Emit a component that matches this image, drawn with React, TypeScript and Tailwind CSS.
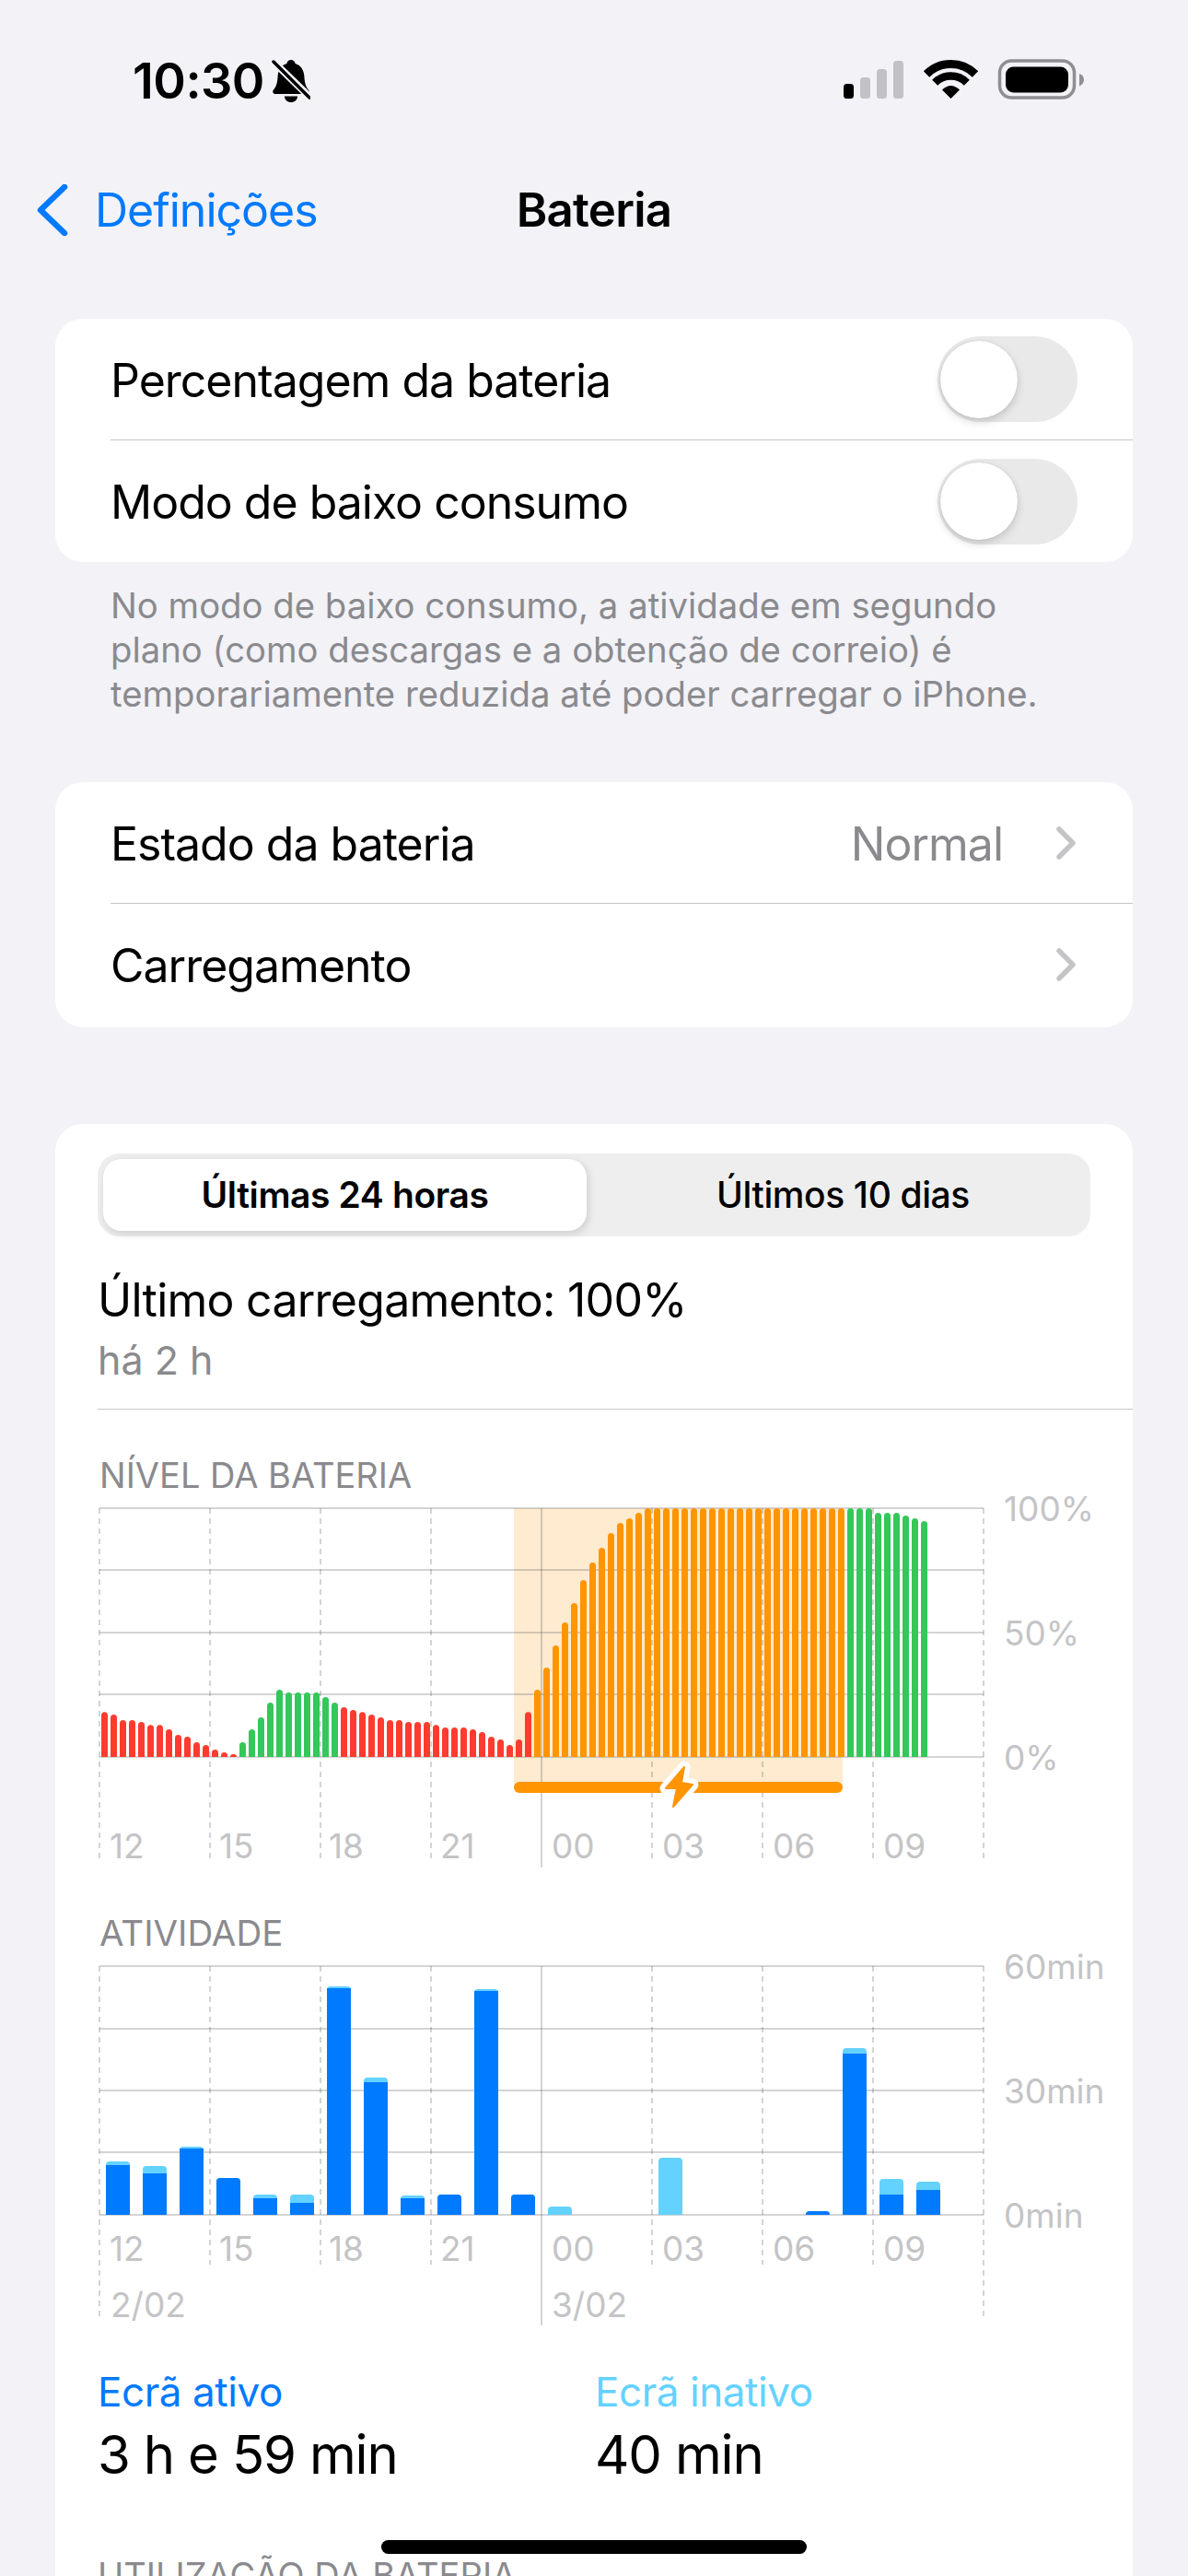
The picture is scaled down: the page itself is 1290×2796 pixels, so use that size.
import React from "react";

const font = "font-['Inter','Noto_Sans',sans-serif]";

// battery level bar heights, px above the baseline, one bar per 15 minutes
const levelBars: { h: number; c: string }[] = [
  ...[146, 138, 120, 120, 114, 104, 104, 90, 72, 66, 48, 39, 24, 15, 9].map((v) => ({ h: v / 3, c: "#ff3b30" })),
  ...[48, 90, 129, 177, 219, 210, 210, 210, 210, 195, 177].map((v) => ({ h: v / 3, c: "#34c759" })),
  ...[162, 153, 146, 138, 129, 120, 120, 114, 114, 114, 104, 96, 96, 96, 90, 81, 66, 57, 39, 57, 146].map((v) => ({ h: v / 3, c: "#ff3b30" })),
  ...[219, 291, 363, 438, 501, 576, 633, 681, 729, 762, 777, 795].map((v) => ({ h: v / 3, c: "#ff9500" })),
  ...Array.from({ length: 22 }, () => ({ h: 270, c: "#ff9500" })),
  ...Array.from({ length: 3 }, () => ({ h: 270, c: "#34c759" })),
  ...[795, 795, 795, 786, 777, 768].map((v) => ({ h: v / 3, c: "#34c759" })),
];

// hourly activity: [screen on, screen on + off] in px
const activity: [number, number][] = [
  [54, 58], [45, 53], [72, 74], [40, 40], [18, 22], [13, 22], [246, 248], [144, 149], [18, 21], [22, 22],
  [243, 245], [22, 22], [0, 9], [0, 0], [0, 0], [0, 62], [0, 0], [0, 0], [0, 0], [4, 4], [175, 181], [22, 39], [27, 36],
];

const hours = ["12", "15", "18", "21", "00", "03", "06", "09"];
const hourX = [19, 138, 257, 378, 499, 619, 739, 859];
const dashX = [8, 128, 248, 368, 608, 728, 848, 968];

function topRounded(x: number, base: number, w: number, h: number, r: number) {
  const rad = Math.min(r, h);
  return `M${x} ${base}V${base - h + rad}Q${x} ${base - h} ${x + rad} ${base - h}H${x + w - rad}Q${x + w} ${base - h} ${x + w} ${base - h + rad}V${base}Z`;
}

function Grid({ rows, dashEnd, edgeEnd, solidEnd }: { rows: number[]; dashEnd: number; edgeEnd: number; solidEnd: number }) {
  const line = "rgba(60,60,67,0.29)";
  return (
    <g>
      {rows.map((y) => (
        <line key={y} x1={8} x2={968} y1={y} y2={y} stroke={line} strokeWidth={1.5} />
      ))}
      {dashX.map((x) => (
        <line
          key={x}
          x1={x}
          x2={x}
          y1={rows[0]}
          y2={x === 8 || x === 968 ? edgeEnd : dashEnd}
          stroke={line}
          strokeWidth={1.5}
          strokeDasharray="6 5"
        />
      ))}
      <line x1={488} x2={488} y1={rows[0]} y2={solidEnd} stroke={line} strokeWidth={1.5} />
    </g>
  );
}

function AxisText({ x, y, children }: { x: number; y: number; children: React.ReactNode }) {
  return (
    <text x={x} y={y} fontSize={37} fill="#c4c4c6" fontFamily="Inter, sans-serif">
      {children}
    </text>
  );
}

function LevelChart() {
  return (
    <svg viewBox="0 0 1130 400" className="ml-[40px] block h-[400px] w-[1130px] overflow-visible">
      <rect x={458} y={7} width={357} height={303} fill="#feebd0" />
      <Grid rows={[7, 74, 142, 209, 277]} dashEnd={391} edgeEnd={391} solidEnd={397} />
      {levelBars.map((b, i) => (
        <path key={i} d={topRounded(10 + i * 10, 277, 7, b.h, 3.5)} fill={b.c} />
      ))}
      <rect x={458} y={304} width={357} height={12} rx={6} fill="#ff9500" />
      {/* charging bolt: white halo first, then the orange shape on top */}
      <path
        d="M643 288L623 311H635L631 331L652 307L640 305L643 288Z"
        fill="#fff"
        stroke="#fff"
        strokeWidth={13}
        strokeLinejoin="round"
      />
      <path
        d="M643 288L623 311H635L631 331L652 307L640 305L643 288Z"
        fill="#ff9500"
        stroke="#ff9500"
        strokeWidth={2}
        strokeLinejoin="round"
      />
      {hours.map((h, i) => (
        <AxisText key={h} x={hourX[i]} y={387}>{h}</AxisText>
      ))}
      <AxisText x={990} y={21}>100%</AxisText>
      <AxisText x={990} y={156}>50%</AxisText>
      <AxisText x={990} y={291}>0%</AxisText>
    </svg>
  );
}

function ActivityChart() {
  return (
    <svg viewBox="0 0 1130 400" className="ml-[40px] block h-[400px] w-[1130px] overflow-visible">
      <Grid rows={[8, 76, 143, 210, 278]} dashEnd={332} edgeEnd={392} solidEnd={398} />
      {activity.map(([on, total], i) => (
        <g key={i}>
          {total > 0 && <path d={topRounded(15 + i * 40, 278, 26, total, 4)} fill="#64d2ff" />}
          {on > 0 && <path d={on === total ? topRounded(15 + i * 40, 278, 26, on, 4) : `M${15 + i * 40} 278V${278 - on}H${41 + i * 40}V278Z`} fill="#007aff" />}
        </g>
      ))}
      {hours.map((h, i) => (
        <AxisText key={h} x={hourX[i]} y={328}>{h}</AxisText>
      ))}
      <AxisText x={20} y={389}>2/02</AxisText>
      <AxisText x={499} y={389}>3/02</AxisText>
      <AxisText x={990} y={22}>60min</AxisText>
      <AxisText x={990} y={157}>30min</AxisText>
      <AxisText x={990} y={292}>0min</AxisText>
    </svg>
  );
}

function Toggle() {
  return (
    <div className="flex h-[93px] w-[152px] items-center rounded-full bg-[#e9e9ea]">
      <div className="ml-[3px] h-[84px] w-[84px] rounded-full bg-white shadow-[0_4px_10px_rgba(0,0,0,0.16),0_0_2px_rgba(0,0,0,0.12)]" />
    </div>
  );
}

function Chevron() {
  return (
    <svg viewBox="0 0 24 38" className="h-[38px] w-[24px]" fill="none">
      <path d="M4 4L19 19L4 34" stroke="#c4c4c7" strokeWidth={5.5} strokeLinecap="round" strokeLinejoin="round" />
    </svg>
  );
}

function Row({ label, right, divider }: { label: string; right: React.ReactNode; divider?: boolean }) {
  return (
    <div className={divider ? "ml-[60px] flex h-[132px] items-center border-b-[1.5px] border-[#c6c6c8] pr-[60px]" : "ml-[60px] flex h-[132px] items-center pr-[60px]"}>
      <span className="flex-1 pt-[2px] text-[50px] leading-[60px] tracking-[-0.02em] text-black">{label}</span>
      {right}
    </div>
  );
}

function BellSlash() {
  return (
    <svg viewBox="0 0 42 46" className="h-[46px] w-[42px]">
      <path d="M21 0C23.6 0 25.4 1.8 25.6 4C32 6 35 11.5 35.4 18C35.8 25 37 29 40 32.5C41.6 34.4 40.6 37 38 37H4C1.4 37 .4 34.4 2 32.5C5 29 6.2 25 6.6 18C7 11.5 10 6 16.4 4C16.6 1.8 18.4 0 21 0Z" fill="#000" />
      <path d="M14 39.5H28C28 43.5 24.8 46 21 46C17.2 46 14 43.5 14 39.5Z" fill="#000" />
      <path d="M3 3L41 40" stroke="#f2f2f7" strokeWidth={8} />
      <path d="M2 2L41 41" stroke="#000" strokeWidth={3.5} strokeLinecap="round" />
    </svg>
  );
}

function StatusIcons() {
  const cx = 116.5;
  const arc = (r: number) => {
    const d = r * Math.SQRT1_2;
    return `M${cx - d} ${41 - d}A${r} ${r} 0 0 1 ${cx + d} ${41 - d}`;
  };
  return (
    <svg viewBox="0 0 262 48" className="mt-[2px] h-[48px] w-[262px] overflow-visible">
      <rect x={0} y={25} width={11} height={16} rx={3.5} fill="#000" />
      <rect x={18} y={18} width={11} height={23} rx={3.5} fill="#c1c1c6" />
      <rect x={36} y={9} width={11} height={32} rx={3.5} fill="#c1c1c6" />
      <rect x={54} y={0} width={11} height={41} rx={3.5} fill="#c1c1c6" />
      <path d={arc(37.5)} stroke="#000" strokeWidth={9} fill="none" />
      <path d={arc(24.5)} stroke="#000" strokeWidth={8.5} fill="none" />
      <path d={`M${cx} 41L${cx - 9.5} 31.5Q${cx} 22.5 ${cx + 9.5} 31.5Z`} fill="#000" />
      <rect x={169.5} y={0} width={81} height={40} rx={13} fill="none" stroke="#8e8e93" strokeWidth={3.5} />
      <rect x={176} y={6.5} width={68} height={28} rx={8.5} fill="#000" />
      <path d="M256 14C259 15 261 17 261 20.5C261 24 259 26 256 27.5Z" fill="#8e8e93" />
    </svg>
  );
}

export default function App() {
  return (
    <div className={`relative h-[2796px] w-[1290px] overflow-hidden bg-[#f2f2f7] ${font}`}>
      <div className="flex h-[166px] items-start justify-between pt-[64px] pl-[144px] pr-[112px]">
        <div className="flex items-center gap-[8px]">
          <span className="text-[54px] leading-[48px] font-semibold tracking-[-0.01em] text-black">10:30</span>
          <BellSlash />
        </div>
        <StatusIcons />
      </div>

      <div className="relative flex h-[124px] items-center justify-center">
        <div className="absolute left-[40px] flex items-center gap-[29px]">
          <svg viewBox="0 0 34 56" className="h-[56px] w-[34px]" fill="none">
            <path d="M30 3L4 28L30 53" stroke="#007aff" strokeWidth={6.5} strokeLinecap="round" strokeLinejoin="round" />
          </svg>
          <span className="text-[50px] leading-[60px] tracking-[-0.02em] text-[#007aff]">Definições</span>
        </div>
        <span className="text-[51px] leading-[60px] font-semibold tracking-[-0.015em] text-black">Bateria</span>
      </div>

      <section className="mx-[60px] mt-[56px] overflow-hidden rounded-[30px] bg-white">
        <Row label="Percentagem da bateria" right={<Toggle />} divider />
        <Row label="Modo de baixo consumo" right={<Toggle />} />
      </section>
      <p className="mt-[23px] mr-[130px] ml-[120px] text-[38.3px] leading-[48px] text-[#8a8a8e]">
        No modo de baixo consumo, a atividade em segundo plano (como descargas e a obtenção de correio) é temporariamente reduzida até poder carregar o iPhone.
      </p>

      <section className="mx-[60px] mt-[72px] h-[266px] overflow-hidden rounded-[30px] bg-white">
        <Row
          label="Estado da bateria"
          divider
          right={
            <div className="flex items-center gap-[57px]">
              <span className="pt-[2px] text-[50px] leading-[60px] tracking-[-0.02em] text-[#8a8a8e]">Normal</span>
              <Chevron />
            </div>
          }
        />
        <Row label="Carregamento" right={<Chevron />} />
      </section>

      <section className="mx-[60px] mt-[105px] rounded-t-[30px] bg-white pt-[32px] pb-[60px]">
        <div className="mr-[46px] ml-[46px] flex h-[90px] items-center rounded-[24px] bg-[#eeeeef] p-[6px]">
          <div className="flex h-[78px] w-[525px] items-center justify-center rounded-[20px] bg-white text-[39px] font-semibold tracking-[-0.01em] text-black shadow-[2px_3px_8px_rgba(0,0,0,0.14)]">
            Últimas 24 horas
          </div>
          <div className="flex h-[78px] flex-1 items-center justify-center pl-[16px] text-[39px] font-medium tracking-[-0.01em] text-black">
            Últimos 10 dias
          </div>
        </div>

        <h2 className="mt-[39px] ml-[46px] text-[50px] leading-[60px] font-normal tracking-[-0.015em] text-black">Último carregamento: 100%</h2>
        <p className="mt-[10px] ml-[46px] text-[43px] leading-[50px] text-[#8a8a8e]">há 2 h</p>
        <div className="mt-[28px] ml-[46px] border-b-[1.5px] border-[#c6c6c8]" />

        <h3 className="mt-[51px] mb-[9px] ml-[48px] text-[38px] leading-[40px] font-normal text-[#8a8a8e]">NÍVEL DA BATERIA</h3>
        <LevelChart />

        <h3 className="mt-[48px] mb-[8px] ml-[48px] text-[38.5px] leading-[40px] font-normal text-[#8a8a8e]">ATIVIDADE</h3>
        <ActivityChart />

        <div className="mt-[45px] ml-[46px] flex">
          <div className="w-[540px]">
            <p className="text-[44px] leading-[50px] tracking-[-0.01em] text-[#007aff]">Ecrã ativo</p>
            <p className="mt-[8px] text-[58px] leading-[70px] tracking-[-0.02em] text-black">3 h e 59 min</p>
          </div>
          <div>
            <p className="text-[44px] leading-[50px] tracking-[-0.01em] text-[#64d2ff]">Ecrã inativo</p>
            <p className="mt-[8px] text-[58px] leading-[70px] tracking-[-0.02em] text-black">40 min</p>
          </div>
        </div>

        <h3 className="mt-[76px] ml-[46px] text-[38px] leading-[40px] font-normal text-[#8a8a8e]">UTILIZAÇÃO DA BATERIA</h3>
      </section>

      <div className="absolute top-[2757px] left-[414px] h-[15px] w-[462px] rounded-full bg-black" />
    </div>
  );
}
